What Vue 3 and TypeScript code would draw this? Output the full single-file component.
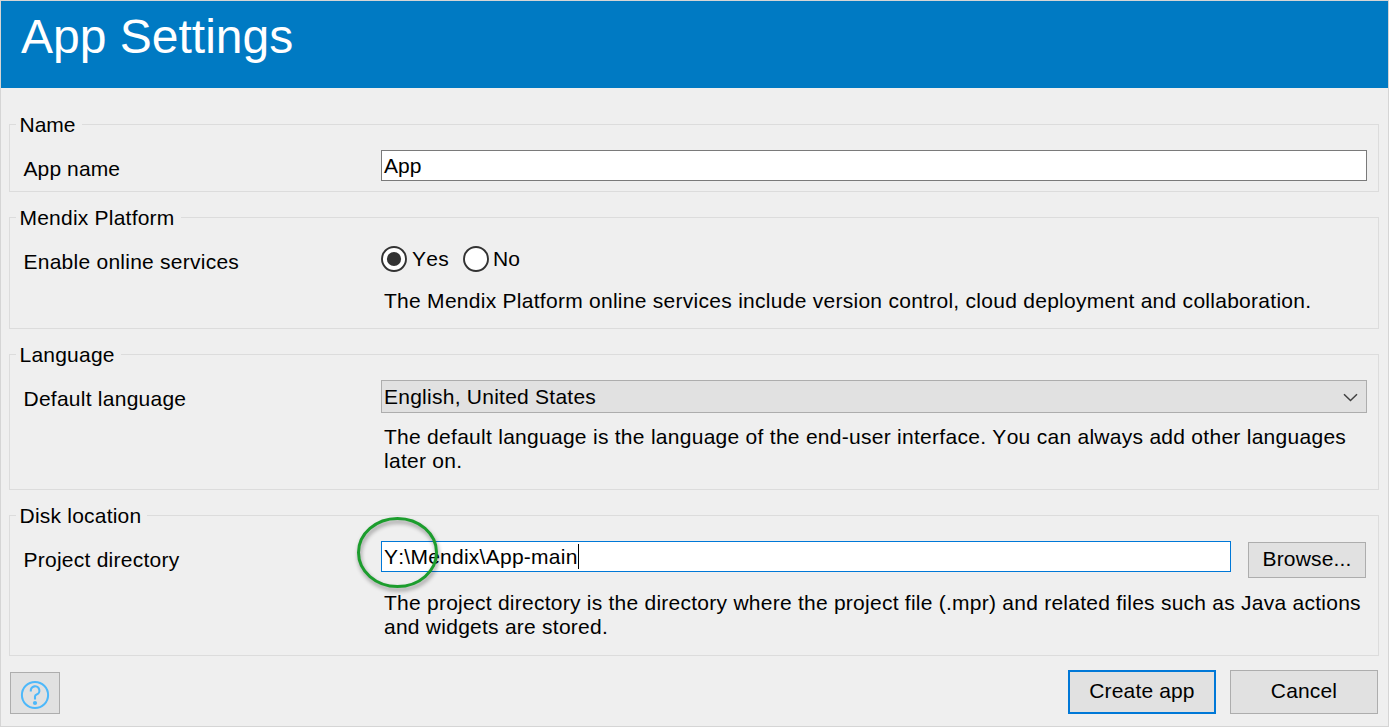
<script setup lang="ts">
import { ref } from 'vue'

const appName = ref('App')
const online = ref(true)
const directory = ref('Y:\\Mendix\\App-main')
</script>

<template>
  <main class="dialog">
    <header class="banner"><h1>App Settings</h1></header>

    <div class="groups">
      <section class="group group-name">
        <h2 class="legend tight">Name</h2>
        <div class="row">
          <span class="label snug">App name</span>
          <div class="field">
            <div class="input"><span class="tight">{{ appName }}</span></div>
          </div>
        </div>
      </section>

      <section class="group group-platform">
        <h2 class="legend">Mendix Platform</h2>
        <div class="row">
          <span class="label">Enable online services</span>
          <div class="field">
            <div class="radios">
              <span class="radio yes" @click="online = true">
                <svg width="26" height="26" viewBox="0 0 26 26">
                  <circle cx="13" cy="13" r="12" fill="#fff" stroke="#333" stroke-width="1.9" />
                  <circle v-if="online" cx="13" cy="13" r="7.1" fill="#333" />
                </svg>
                <span>Yes</span>
              </span>
              <span class="radio no" @click="online = false">
                <svg width="26" height="26" viewBox="0 0 26 26">
                  <circle cx="13" cy="13" r="12" fill="#fff" stroke="#333" stroke-width="1.9" />
                  <circle v-if="!online" cx="13" cy="13" r="7.1" fill="#333" />
                </svg>
                <span class="tight">No</span>
              </span>
            </div>
            <p class="hint hint-platform">The Mendix Platform online services include version control, cloud deployment and collaboration.</p>
          </div>
        </div>
      </section>

      <section class="group group-language">
        <h2 class="legend">Language</h2>
        <div class="row">
          <span class="label">Default language</span>
          <div class="field">
            <div class="select">
              <span>English, United States</span>
              <svg width="15" height="9" viewBox="0 0 15 9">
                <path d="M1 1.2L7.5 7.5L14 1.2" fill="none" stroke="#404040" stroke-width="1.5" />
              </svg>
            </div>
            <p class="hint hint-language">The default language is the language of the end-user interface. You can always add other languages<br />later on.</p>
          </div>
        </div>
      </section>

      <section class="group group-disk">
        <h2 class="legend">Disk location</h2>
        <div class="row">
          <span class="label">Project directory</span>
          <div class="field">
            <div class="picker">
              <div class="input focused">
                <span>{{ directory }}</span><i class="caret"></i>
                <svg class="marker" width="100" height="90" viewBox="0 0 100 90">
                  <ellipse cx="47.5" cy="42.5" rx="39" ry="34" fill="none" stroke="#1c9d2d" stroke-width="3" />
                </svg>
              </div>
              <button class="btn browse">Browse...</button>
            </div>
            <p class="hint hint-disk">The project directory is the directory where the project file (.mpr) and related files such as Java actions<br />and widgets are stored.</p>
          </div>
        </div>
      </section>
    </div>

    <footer class="footer">
      <button class="btn help" aria-label="Help">
        <svg width="30" height="30" viewBox="0 0 30 30" fill="none" stroke="#4db8fa">
          <circle cx="15" cy="15" r="13.1" stroke-width="2" />
          <path d="M10.8 11.5V11A4.3 4.3 0 1 1 16.6 14.6Q15 15.2 15 16.5V19.6" stroke-width="2.1" />
          <circle cx="15" cy="23" r="2.1" fill="#4db8fa" stroke="none" />
        </svg>
      </button>
      <div class="actions">
        <button class="btn primary">Create app</button>
        <button class="btn">Cancel</button>
      </div>
    </footer>
  </main>
</template>

<style>
body {
  margin: 0;
  overflow: hidden;
}
</style>

<style scoped>
* {
  box-sizing: border-box;
}
.dialog {
  width: 1389px;
  height: 727px;
  border: 1px solid #d5d5d5;
  background: #efefef;
  color: #000;
  font: 21px/24px "Liberation Sans", Arial, sans-serif;
  font-kerning: none;
  white-space: nowrap;
  letter-spacing: 0.25px;
}
h1, h2, p {
  margin: 0;
  font-weight: 400;
}
.banner {
  height: 87px;
  padding: 9px 0 0 20px;
  background: #007ac3;
  color: #fff;
}
h1 {
  font-size: 48px;
  line-height: 54px;
  letter-spacing: 0;
}
.groups {
  display: flex;
  flex-direction: column;
  gap: 25px;
  margin: 36px 9px 0 8px;
}
.group {
  border: 1px solid #dcdcdc;
}
.group-name { height: 68px; }
.group-platform { height: 112px; }
.group-language { height: 136px; }
.group-disk { height: 141px; }
.legend {
  width: max-content;
  height: 24px;
  margin: -12px 0 0 6px;
  padding: 0 6px 0 3.5px;
  background: #efefef;
  font-size: 21px;
  line-height: 24px;
  letter-spacing: 0.22px;
}
.row {
  display: grid;
  grid-template-columns: 358px 986px;
  margin: 13px 0 0 13px;
}
.label {
  margin: 7px 0 0 0.5px;
}
.tight {
  letter-spacing: 0;
}
.snug {
  letter-spacing: 0.1px;
}
.input {
  display: flex;
  position: relative;
  height: 31px;
  padding: 3px 0 0 2px;
  border: 1px solid #7a7a7a;
  background: #fff;
}
.input.focused {
  width: 850px;
  border-color: #0078d7;
}
.caret {
  width: 1px;
  height: 25px;
  margin-top: -1px;
  background: #000;
}
.marker {
  position: absolute;
  left: -32px;
  top: -32px;
  overflow: visible;
  filter: drop-shadow(1px 3px 2px rgba(0, 0, 0, 0.4));
}
.radios {
  display: flex;
  gap: 14px;
  height: 26px;
  margin-top: 3px;
}
.radio {
  display: flex;
  gap: 5px;
}
.radio > span {
  margin-top: 1px;
}
.radio.yes {
  width: 68px;
}
.radio.no {
  gap: 4px;
}
.select {
  display: flex;
  justify-content: space-between;
  align-items: center;
  height: 33px;
  padding: 0 8px 0 2px;
  border: 1px solid #adadad;
  background: #e1e1e1;
}
.select svg {
  margin-top: 2px;
}
.hint {
  padding-left: 3px;
}
.hint-platform {
  margin-top: 17px;
  letter-spacing: 0.273px;
}
.hint-language {
  margin-top: 12px;
  letter-spacing: 0.275px;
}
.hint-disk { margin-top: 13px; }
.picker {
  display: flex;
  align-items: flex-start;
  gap: 17px;
}
.btn {
  display: flex;
  justify-content: center;
  align-items: center;
  width: 148px;
  height: 44px;
  padding: 0 0 2px;
  border: 1px solid #adadad;
  border-radius: 0;
  background: #e1e1e1;
  color: #000;
  font: inherit;
  font-kerning: none;
  letter-spacing: 0.15px;
}
.btn.browse {
  width: 118px;
  height: 36px;
  margin-top: 1px;
}
.btn.primary {
  border: 2px solid #0078d7;
}
.btn.help {
  width: 50px;
  height: 42px;
  margin-top: 2px;
  padding: 4px 0 0;
}
.footer {
  display: flex;
  justify-content: space-between;
  margin: 14px 10px 0 9px;
}
.actions {
  display: flex;
  gap: 14px;
}
</style>
